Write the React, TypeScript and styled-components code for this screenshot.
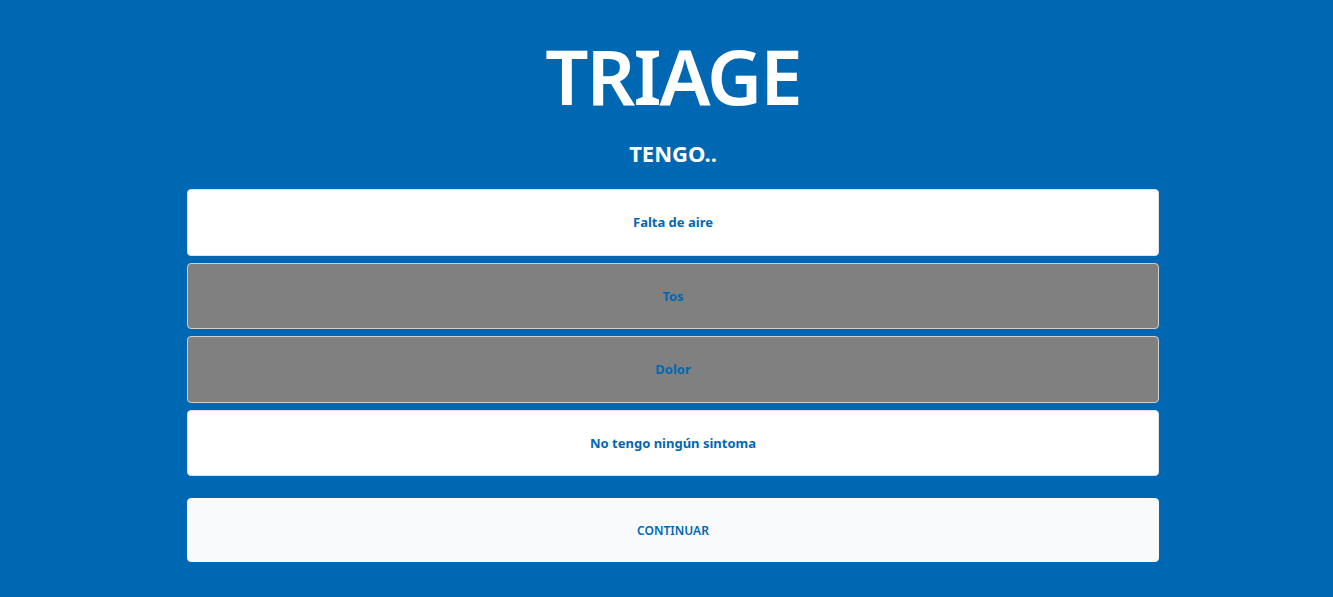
import styled, { createGlobalStyle } from 'styled-components';

const GlobalStyle = createGlobalStyle`
  html, body {
    margin: 0;
    padding: 0;
    background: #0068b3;
    font-family: "Noto Sans", "Open Sans", sans-serif;
  }
`;

const Page = styled.div`
  min-height: 597px;
  background: #0068b3;
  display: flex;
  flex-direction: column;
  align-items: center;
  padding-left: 13px;
  box-sizing: border-box;
`;

const Title = styled.h1`
  margin: 28px 0 0;
  color: #fff;
  font-size: 76px;
  font-weight: 600;
  letter-spacing: -2px;
  line-height: 96px;
`;

const Subtitle = styled.h3`
  margin: 14px 0 21px;
  color: #fff;
  font-size: 22px;
  font-weight: 700;
  line-height: 30px;
`;

const List = styled.div`
  width: 972px;
  display: flex;
  flex-direction: column;
  gap: 7px;
`;

const Option = styled.button<{ $active?: boolean }>`
  height: 66.5px;
  width: 100%;
  border-radius: 4px;
  border: 1px solid ${p => (p.$active ? '#d0d0d0' : '#dee2e6')};
  background: ${p => (p.$active ? '#808080' : '#ffffff')};
  color: #0068b3;
  font-family: inherit;
  font-size: 13px;
  font-weight: 700;
  cursor: pointer;
`;

const Continue = styled.button`
  margin-top: 22px;
  width: 972px;
  height: 64px;
  border-radius: 4px;
  border: 1px solid #f8f9fa;
  background: #f8f9fa;
  color: #0068b3;
  font-family: inherit;
  font-size: 12px;
  font-weight: 600;
  cursor: pointer;
`;

const options = [
  { label: 'Falta de aire', active: false },
  { label: 'Tos', active: true },
  { label: 'Dolor', active: true },
  { label: 'No tengo ningún sintoma', active: false },
];

export default function App() {
  return (
    <Page>
      <GlobalStyle />
      <Title>TRIAGE</Title>
      <Subtitle>TENGO..</Subtitle>
      <List>
        {options.map(o => (
          <Option key={o.label} $active={o.active}>
            {o.label}
          </Option>
        ))}
      </List>
      <Continue>CONTINUAR</Continue>
    </Page>
  );
}
